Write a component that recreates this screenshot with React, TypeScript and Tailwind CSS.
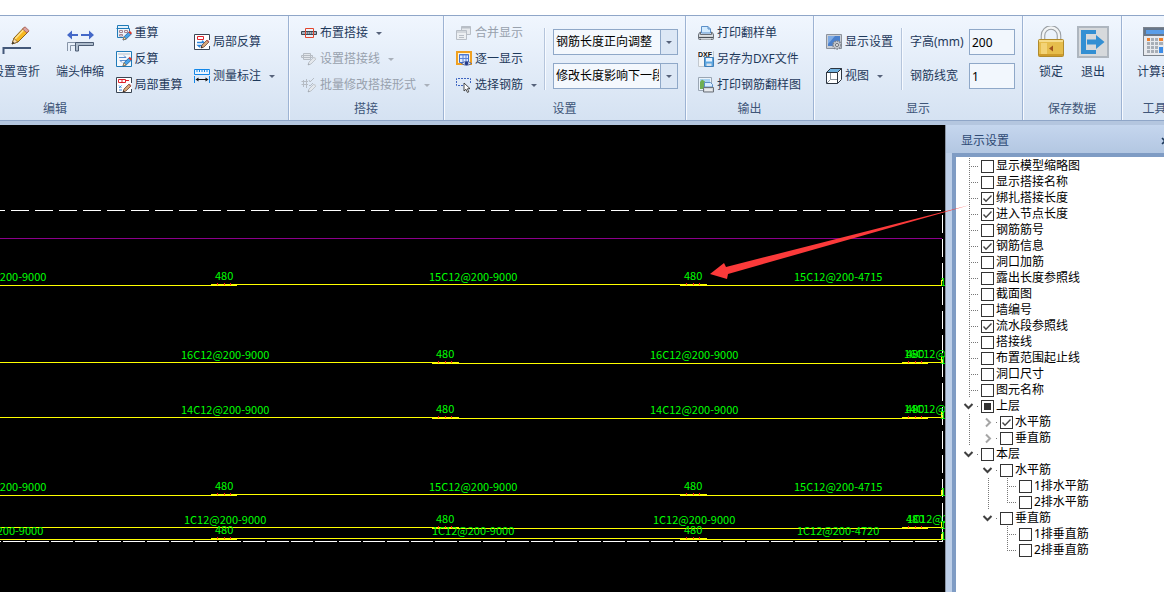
import { ReactNode } from "react";

const INK = "#1e395b";

/* ---------- ribbon icons ---------- */

function Pencil({ x, y, muted }: { x: number; y: number; muted?: boolean }) {
  return (
    <g transform={`translate(${x} ${y})`}>
      <path d="M0 8 L1 5 L6 0 L8 2 L3 7 Z" fill={muted ? "#e4e8ed" : "#d8a878"} stroke={muted ? "#b4bac2" : "#6d4a3a"} strokeWidth="0.8" />
      <path d="M5.5 0.8 L6.6 -0.3 L8.4 1.5 L7.3 2.6 Z" fill={muted ? "#cdd2d8" : "#b8605a"} />
      <path d="M0 8 L0.6 6.2 L1.8 7.4 Z" fill={muted ? "#9aa1aa" : "#1b1b1b"} />
    </g>
  );
}

function BluePencil({ x, y }: { x: number; y: number }) {
  return (
    <g transform={`translate(${x} ${y})`}>
      <path d="M0 9 L1 5.8 L6 0.8 L8.4 3 L3.2 8 Z" fill="#4aa3e8" stroke="#1d5f9c" strokeWidth="0.8" />
      <path d="M5.4 1.2 L6.8 -0.2 L9 2 L7.6 3.4 Z" fill="#e0392b" />
      <path d="M0 9 L1 5.8 L3.2 8 Z" fill="#f7d9a0" stroke="#6d4a2a" strokeWidth="0.5" />
    </g>
  );
}

function Svg16({ children }: { children: ReactNode }) {
  return (
    <svg width="16" height="16" viewBox="0 0 16 16" fill="none" className="shrink-0" aria-hidden="true">
      {children}
    </svg>
  );
}

function Svg32({ children }: { children: ReactNode }) {
  return (
    <svg width="32" height="32" viewBox="0 0 32 32" fill="none" className="shrink-0" aria-hidden="true">
      {children}
    </svg>
  );
}

const icons = {
  bend: (
    <Svg32>
      <path d="M3.5 28 V22 H31" stroke="#44597a" strokeWidth="2" />
      <path d="M12 18 L14 12 L24 1.5 L28.5 5.5 L18 16 Z" fill="#f6b81f" stroke="#8a6420" />
      <path d="M15 13 L25 2.5" stroke="#ffe28a" strokeWidth="1.6" />
      <path d="M22.5 3 L25 0.8 L29 4.6 L27 7 Z" fill="#d9a3a0" stroke="#a04a44" strokeWidth="0.7" />
      <path d="M12 18 L14 12.4 L17.6 16 Z" fill="#f9dfb4" stroke="#6b4d20" strokeWidth="0.6" />
      <path d="M12 18 L12.8 15.6 L14.4 17.2 Z" fill="#222" />
    </Svg32>
  ),
  stretch: (
    <Svg32>
      <path d="M4 9 H14 M17 9 H28" stroke="#4468c8" strokeWidth="2" />
      <path d="M3 9 L8 4.5 V13.5 Z M30 9 L25 4.5 V13.5 Z" fill="#4468c8" />
      <path d="M3.5 25 V16.5 H12.5 M6.5 25 V19.5 H12" stroke="#8795a8" />
      <path d="M11.5 25 V16.5 H29.5 V19.5 H14.5 V25 Z" fill="#aebccc" stroke="#4c5c74" />
    </Svg32>
  ),
  recalc: (
    <Svg16>
      <path d="M1.5 3.5 V0.5 H12.5 V3 M0.5 3.5 H13.5 M1.500 3.500 V12.500 H7 M13.500 3.500 V6" fill="#e4f1fb" stroke="#1f7ab8" />
      <path d="M3.5 5.5 H6.5 V7.5 H3.5 Z M8.5 5.5 H11.5 V7.5 H8.5 Z M3.5 9.5 H6.5 V11 H3.5 Z" stroke="#a8848e" />
      <BluePencil x={7} y={6} />
    </Svg16>
  ),
  reverse: (
    <Svg16>
      <path d="M0.5 0.5 H15.5 V15.5 H0.5 Z" fill="#f4f8fc" stroke="#1f7ab8" />
      <path d="M2 2 H14 V4 H2 Z" fill="#d5dbe2" />
      <path d="M3 6.5 H10 L8 4.5 M12 9.5 H4 L6 11.5" stroke="#5b8fd0" />
      <BluePencil x={7} y={6} />
    </Svg16>
  ),
  partRecalc: (
    <Svg16>
      <path d="M15.5 6 V0.5 H0.5 V15.5 H15.5 V12" fill="#fff" stroke="#3a4654" />
      <path d="M2.5 2.5 H9.5 V5.5 H2.5 Z M6 2.5 V5.5 M10 3.5 H13" stroke="#e0222c" />
      <path d="M3 8.5 L5.5 11 M5.5 8.5 L3 11 M3 13 H6" stroke="#3c8de0" />
      <Pencil x={7} y={7} />
    </Svg16>
  ),
  partReverse: (
    <Svg16>
      <path d="M15.5 6 V0.5 H0.5 V15.5 H15.5 V12" fill="#fff" stroke="#3a4654" />
      <path d="M3.5 2.5 H9.5 V5.5 H3.5 Z" stroke="#e0222c" />
      <path d="M3 8.5 H10 L8 6.8 M10 11.5 H4 L6 13.2" stroke="#2c86dd" strokeWidth="1.3" />
      <Pencil x={7} y={6} />
    </Svg16>
  ),
  measure: (
    <Svg16>
      <path d="M0.5 1.5 H15.5 V6.5 H0.5 Z" fill="#e9f4ff" stroke="#1387e8" />
      <path d="M3 2 V4 M5.5 2 V4 M8 2 V4 M10.5 2 V4 M13 2 V4" stroke="#1387e8" />
      <path d="M0.5 8 V15 M15.5 8 V15" stroke="#1387e8" />
      <path d="M3 11.5 H13" stroke="#111" />
      <path d="M1.5 11.5 L4.5 9.5 V13.5 Z M14.5 11.5 L11.5 9.5 V13.5 Z" fill="#111" />
    </Svg16>
  ),
  lap: (
    <Svg16>
      <path d="M0.5 6.5 H15.5 V9.5 H0.5 Z" fill="#9fb0be" stroke="#3c4753" />
      <path d="M4.5 3.5 H12.5 V12.5 H4.5 Z" stroke="#e2452c" />
      <path d="M6 8 H11" stroke="#3c4753" strokeDasharray="1 1" />
    </Svg16>
  ),
  lapLine: (
    <Svg16>
      <path d="M2.5 2.5 H9.5 V8.5 H2.5 Z M0.5 4.5 H11.5 V6.5 H0.5 Z" fill="#e3e7ec" stroke="#b6bcc4" />
      <Pencil x={7} y={6} muted />
    </Svg16>
  ),
  lapForm: (
    <Svg16>
      <path d="M0.5 4.5 H7 M0.5 7.5 H7 M2.5 3 V10 M5.5 2 V11 M8 3 L9 5 L13 1 M8 8 L9 9 L12 6" stroke="#b6bcc4" />
      <Pencil x={7} y={7} muted />
    </Svg16>
  ),
  merge: (
    <Svg16>
      <path d="M5.5 1.5 H14.5 V9.5 H5.5 Z" fill="#e6e9ed" stroke="#b8bec6" />
      <path d="M5.5 2.5 H14.5" stroke="#b8bec6" strokeWidth="2" />
      <path d="M0.5 5.5 H10.5 V14.5 H0.5 Z" fill="#eceff2" stroke="#b8bec6" />
      <path d="M1 7 H10 M3 10.5 H8 M3 12.5 H8" stroke="#b8bec6" />
    </Svg16>
  ),
  eachOne: (
    <Svg16>
      <path d="M1 1 H15 V13 H1 Z" fill="#fff5d8" stroke="#f0a020" strokeWidth="2" />
      <path d="M3.5 3.5 H12.5 V11.5 H3.5 Z" fill="#dce8ff" stroke="#3e6ed0" />
      <path d="M3.5 4 H12.5 M4 7.5 H12 M7 4 V11 M10 4 V11" stroke="#5a84d8" />
      <path d="M5.5 12.5 Q10.5 8.5 15.5 12.5 Q10.5 16 5.5 12.5 Z" fill="#dfe7f8" stroke="#3a4f8e" strokeWidth="0.8" />
      <circle cx="10.5" cy="12.4" r="1.8" fill="#223a8a" />
    </Svg16>
  ),
  pick: (
    <Svg16>
      <path d="M7 8.5 H0.5 V1.5 H14.5 V7" stroke="#3c63c0" strokeDasharray="2 1" />
      <path d="M8 6 L8 14 L10 12.3 L11.4 15.4 L12.8 14.8 L11.4 11.8 L14 11.6 Z" fill="#fff" stroke="#222" strokeWidth="0.8" />
    </Svg16>
  ),
  printer: (
    <Svg16>
      <path d="M3.5 8 V1.5 H10 L12.500 4 V8 Z" fill="#d3ebff" stroke="#5b8fc8" />
      <path d="M10 1.5 V4 H12.5" stroke="#5b8fc8" />
      <path d="M2.500 7 Q0.5 8 0.5 10 V13.5 Q0.5 14.5 1.5 14.5 H14.5 Q15.500 14.5 15.500 13.5 V10 Q15.5 8 13.5 7 V9.5 H2.5 Z" fill="#c9cdd3" stroke="#6a7078" />
      <path d="M1 11 H15" stroke="#f4f6f8" />
      <path d="M1 12.5 H15" stroke="#4a5058" strokeWidth="1.2" />
      <path d="M3 14 H13" stroke="#eef1f4" />
    </Svg16>
  ),
  dxf: (
    <Svg16>
      <path d="M0 0 H16 V16 H0 Z" fill="#f3f5f7" />
      <path d="M0.5 6 V15.5 H6 M15.5 0 V7" stroke="#c2c8cf" />
      <text x="0" y="5.8" fontSize="7" fontWeight="700" fill="#111" fontFamily="Liberation Sans, sans-serif">DXF</text>
      <path d="M6.5 6.500 H15.5 V15.5 H6.5 Z" fill="#5da6e0" stroke="#3f7fb8" />
      <path d="M8 7 H14 V10.5 H8 Z" fill="#eaf4ff" />
      <path d="M8.5 12.5 H13.5 V15 H8.5 Z" fill="#d8e3ee" />
    </Svg16>
  ),
  printPic: (
    <Svg16>
      <path d="M0.5 0.5 H13.5 V13.5 H0.5 Z" fill="#eaf3fb" stroke="#9aa6b4" />
      <path d="M2 2 H12 V7 H2 Z" fill="#a9d2f2" />
      <path d="M2 12 V5 L4 2.5 L7 4.5 V12 Z" fill="#6fae52" />
      <path d="M6.500 10 V5.5 H12.5 L14.5 7.5 V10 Z" fill="#d9edff" stroke="#5b8fc8" />
      <path d="M5.5 10.5 H15.5 V15 H5.5 Z" fill="#d2d6db" stroke="#6c727a" />
      <path d="M7 13 H14" stroke="#fff" />
    </Svg16>
  ),
  display: (
    <Svg16>
      <path d="M0.5 0.5 H15.5 V14.5 H0.5 Z" fill="#c9ced6" stroke="#8d939c" />
      <path d="M2 2 H14 V12 H2 Z" fill="#4a80cc" />
      <path d="M2 2 H9 L2 10 Z" fill="#7fabe4" />
      <circle cx="11" cy="11" r="4" fill="#c6cad0" stroke="#80868f" strokeDasharray="1.6 1" strokeWidth="1.6" />
      <circle cx="11" cy="11" r="1.5" fill="#fff" stroke="#666c74" />
    </Svg16>
  ),
  cube: (
    <Svg16>
      <path d="M0.5 4.5 H11.5 V15.5 H0.5 Z" fill="#fff" stroke="#2c3540" />
      <path d="M0.5 4.5 L4.5 0.5 H15.5 L11.5 4.5 Z" fill="#6fb0de" stroke="#2c3540" />
      <path d="M11.5 4.5 L15.5 0.5 V11.5 L11.5 15.5 Z" fill="#f4f7fa" stroke="#2c3540" />
      <path d="M4.5 5 V11.5 H11 M4.5 11.5 L1 15" stroke="#8a949e" />
    </Svg16>
  ),
  lock: (
    <Svg32>
      <path d="M8 14 V9.5 A8 8 0 0 1 24 9.5 V14" stroke="#9a9fa4" strokeWidth="4.6" />
      <path d="M8 14 V9.5 A8 8 0 0 1 24 9.5 V14" stroke="#f2f4f5" strokeWidth="2.4" />
      <rect x="3.5" y="13.5" width="25" height="17" rx="1" fill="#e6bd4c" stroke="#b08a2c" />
      <path d="M4 15 H28" stroke="#f6dc8a" strokeWidth="2" />
      <path d="M6 17 H12 V28 H6 Z" fill="#f3d376" />
      <path d="M4 29 H28" stroke="#cd9b2c" strokeWidth="2" />
      <path d="M14 22.5 L18 19.5 V25.5 Z" fill="#a0521c" />
    </Svg32>
  ),
  exit: (
    <Svg32>
      <rect x="1" y="1" width="30" height="30" fill="#d6d9dc" stroke="#aeb6bf" strokeWidth="2" />
      <path d="M19 4 H4 V28 H19 V24 H9 V8 H19 Z" fill="#338fd3" />
      <path d="M10 13.500 H19 V9 L27.500 16 L19 23 V18.500 H10 Z" fill="#338fd3" />
    </Svg32>
  ),
  calc: (
    <Svg32>
      <rect x="4.5" y="1.5" width="28" height="28" fill="#e8eaee" stroke="#7c838c" />
      <path d="M5 2 H32 V10 H5 Z" fill="#66768a" />
      <rect x="7" y="4" width="24" height="4" fill="#5a9de8" />
      <path d="M8 12 H11 V15 H8 Z M20 12 H24 V15 H20 Z" fill="#f0802c" />
      <path d="M12 12 H15 V15 H12 Z M16 12 H19 V15 H16 Z M8 16 H11 V19 H8 Z M12 16 H15 V19 H12 Z M16 16 H19 V19 H16 Z M20 16 H24 V19 H20 Z M8 20 H11 V23 H8 Z M12 20 H15 V23 H12 Z M16 20 H19 V23 H16 Z M8 24 H11 V27 H8 Z M12 24 H15 V27 H12 Z M16 24 H19 V27 H16 Z" fill="#a8aeb6" />
      <path d="M20 21 H24 V27 H20 Z" fill="#3d8ce6" />
    </Svg32>
  ),
};

/* ---------- ribbon parts ---------- */

function Caret({ muted }: { muted?: boolean }) {
  return (
    <svg width="6" height="3" viewBox="0 0 6 3" className="shrink-0" aria-hidden="true">
      <path d="M0 0 H6 L3 3 Z" fill={muted ? "#a9b0ba" : "#56627a"} />
    </svg>
  );
}

function Tool({ icon, label, menu, disabled }: { icon: ReactNode; label: string; menu?: boolean; disabled?: boolean }) {
  return (
    <button type="button" disabled={disabled} className="flex items-center gap-[3px] whitespace-nowrap text-[#1e395b] disabled:text-[#98a1ad]">
      {icon}
      <span>{label}</span>
      {menu && (
        <span className="pl-[5px]">
          <Caret muted={disabled} />
        </span>
      )}
    </button>
  );
}

function BigTool({ icon, label }: { icon: ReactNode; label: string }) {
  return (
    <button type="button" className="flex shrink-0 flex-col items-center gap-1 whitespace-nowrap pt-[6px]">
      {icon}
      <span className="leading-5">{label}</span>
    </button>
  );
}

function Group({ label, className, children }: { label: string; className: string; children: ReactNode }) {
  return (
    <section aria-label={label} className={`flex shrink-0 flex-col border-r border-[#9db3d3] pt-1 shadow-[1px_0_0_#f7faff] ${className}`}>
      <div className="flex h-[78px]">{children}</div>
      <h2 className="text-center leading-[22px] text-[#3e5578]">{label}</h2>
    </section>
  );
}

function Three({ className, children }: { className: string; children: ReactNode }) {
  return <div className={`grid shrink-0 grid-rows-3 justify-items-start ${className}`}>{children}</div>;
}

function Two({ className, children }: { className: string; children: ReactNode }) {
  return <div className={`grid shrink-0 grid-rows-2 content-center justify-items-start py-[5px] ${className}`}>{children}</div>;
}

function Rule() {
  return <div className="my-2 w-px bg-[#b5c5dc] shadow-[1px_0_0_#f7faff]" />;
}

function Combo({ name, value }: { name: string; value: string }) {
  return (
    <div className="relative h-[26px] w-[125px] self-center">
      <select aria-label={name} defaultValue={value} className="h-full w-full appearance-none border border-[#8fa8c8] bg-[#f4f8fd] pl-[2px] pr-[18px] text-black">
        <option>{value}</option>
      </select>
      <span className="pointer-events-none absolute inset-y-px right-px flex w-[17px] items-center justify-center border-l border-[#8fa8c8] bg-[#dce7f5]">
        <Caret />
      </span>
    </div>
  );
}

function Field({ id, label, value }: { id: string; label: string; value: string }) {
  return (
    <div className="flex items-center">
      <label htmlFor={id} className="w-[59px] whitespace-nowrap">
        {label}
      </label>
      <input id={id} defaultValue={value} className="h-[26px] w-[46px] border border-[#8fa8c8] bg-[#f2f7fd] px-[2px] text-black" />
    </div>
  );
}

function Ribbon() {
  return (
    <header className="flex overflow-hidden border-y border-[#8fa6c8] bg-linear-to-b from-[#f0f6fe] to-[#d5e2f2]">
      <Group label="编辑" className="-ml-[178px] w-[467px]">
        <div className="flex flex-1 justify-between pl-[170px] pr-[13px]">
          <div className="flex gap-4">
            <BigTool icon={icons.bend} label="设置弯折" />
            <BigTool icon={icons.stretch} label="端头伸缩" />
          </div>
          <Three className="">
            <Tool icon={icons.recalc} label="重算" />
            <Tool icon={icons.reverse} label="反算" />
            <Tool icon={icons.partRecalc} label="局部重算" />
          </Three>
          <Two className="">
            <Tool icon={icons.partReverse} label="局部反算" />
            <Tool icon={icons.measure} label="测量标注" menu />
          </Two>
        </div>
      </Group>
      <Group label="搭接" className="w-[155px]">
        <Three className="pl-3">
          <Tool icon={icons.lap} label="布置搭接" menu />
          <Tool icon={icons.lapLine} label="设置搭接线" menu disabled />
          <Tool icon={icons.lapForm} label="批量修改搭接形式" menu disabled />
        </Three>
      </Group>
      <Group label="设置" className="w-[242px]">
        <Three className="w-[100px] pl-3">
          <Tool icon={icons.merge} label="合并显示" disabled />
          <Tool icon={icons.eachOne} label="逐一显示" />
          <Tool icon={icons.pick} label="选择钢筋" menu />
        </Three>
        <Rule />
        <Two className="pl-2">
          <Combo name="调整方向" value="钢筋长度正向调整" />
          <Combo name="影响范围" value="修改长度影响下一段" />
        </Two>
      </Group>
      <Group label="输出" className="w-[128px]">
        <Three className="pl-3">
          <Tool icon={icons.printer} label="打印翻样单" />
          <Tool icon={icons.dxf} label="另存为DXF文件" />
          <Tool icon={icons.printPic} label="打印钢筋翻样图" />
        </Three>
      </Group>
      <Group label="显示" className="w-[209px]">
        <Two className="w-[87px] pl-3">
          <Tool icon={icons.display} label="显示设置" />
          <Tool icon={icons.cube} label="视图" menu />
        </Two>
        <Rule />
        <Two className="pl-2">
          <Field id="font-height" label="字高(mm)" value="200" />
          <Field id="bar-width" label="钢筋线宽" value="1" />
        </Two>
      </Group>
      <Group label="保存数据" className="w-[99px]">
        <div className="flex gap-[10px] pl-3">
          <BigTool icon={icons.lock} label="锁定" />
          <BigTool icon={icons.exit} label="退出" />
        </div>
      </Group>
      <Group label="工具" className="w-[66px]">
        <div className="flex pl-[15px]">
          <BigTool icon={icons.calc} label="计算器" />
        </div>
      </Group>
    </header>
  );
}

/* ---------- drawing ---------- */

type BarRow = { y: number; kind: "odd" | "even"; marks: [string, number][] };

const rows: BarRow[] = [
  { y: 159, kind: "odd", marks: [["15C12@200-9000", -42], ["15C12@200-9000", 429], ["15C12@200-4715", 794]] },
  { y: 237, kind: "even", marks: [["16C12@200-9000", 181], ["16C12@200-9000", 650], ["16C12@200-4715", 904]] },
  { y: 292, kind: "even", marks: [["14C12@200-9000", 181], ["14C12@200-9000", 650], ["14C12@200-4715", 904]] },
  { y: 369, kind: "odd", marks: [["15C12@200-9000", -42], ["15C12@200-9000", 429], ["15C12@200-4715", 794]] },
  { y: 402, kind: "even", marks: [["1C12@200-9000", 184], ["1C12@200-9000", 653], ["1C12@200-4720", 907]] },
  { y: 413, kind: "odd", marks: [["1C12@200-9000", -39], ["1C12@200-9000", 432], ["1C12@200-4720", 797]] },
];

function Bar({ y, kind, marks }: BarRow) {
  const odd = kind === "odd";
  const laps = odd ? [211, 680] : [432, 902];
  const path = odd
    ? `M0 ${y + 1.5} H237 M211 ${y + 0.5} H707 M680 ${y + 1.5} H941.5 V${y - 4}`
    : `M0 ${y + 0.5} H459 M432 ${y + 1.5} H928 M902 ${y + 0.5} H941.5 V${y - 5}`;
  return (
    <g>
      {laps.map((x) => (
        <text key={x} x={x + 4} y={y - 4}>480</text>
      ))}
      {marks.map(([t, x]) => (
        <text key={x} x={x} y={x > 900 ? y - 4 : y - 3}>{t}</text>
      ))}
      <text x="940" y={y + 2}>1</text>
      <path d={path} stroke="#ffff00" fill="none" />
      {laps.map((x) => (
        <path key={x} d={`M${x + 6.5} ${y - 1} v2 M${x + 13.5} ${y - 1} v2 M${x + 19.5} ${y - 1} v2`} stroke="#ff2020" />
      ))}
    </g>
  );
}

function Drawing() {
  return (
    <div className="min-w-0 flex-1 overflow-hidden bg-black">
      <svg width="945" height="467" viewBox="0 0 945 467" role="img" aria-label="钢筋排布图" className="block">
        <g shapeRendering="crispEdges">
          <path d="M-13 85.5 H943" stroke="#fff" strokeDasharray="18 6" />
          <path d="M942.5 90 V416" stroke="#fff" strokeDasharray="18 6" />
          <path d="M-21 416.5 H943" stroke="#fff" strokeDasharray="22 2" />
          <path d="M0 113.5 H942" stroke="#8b008b" />
        </g>
        <g fill="#00ff00" fontSize="11" fontFamily="'Noto Sans CJK SC', sans-serif">
          {rows.map((r) => (
            <Bar key={r.y} y={r.y} kind={r.kind} marks={r.marks} />
          ))}
        </g>
      </svg>
    </div>
  );
}

/* ---------- settings tree ---------- */

type Slot = "tee" | "end" | "line" | "none" | "open" | "closed";
type Item = { label: string; slots: Slot[]; state?: "on" | "mixed" };

const items: Item[] = [
  { label: "显示模型缩略图", slots: ["tee"] },
  { label: "显示搭接名称", slots: ["tee"] },
  { label: "绑扎搭接长度", slots: ["tee"], state: "on" },
  { label: "进入节点长度", slots: ["tee"], state: "on" },
  { label: "钢筋筋号", slots: ["tee"] },
  { label: "钢筋信息", slots: ["tee"], state: "on" },
  { label: "洞口加筋", slots: ["tee"] },
  { label: "露出长度参照线", slots: ["tee"] },
  { label: "截面图", slots: ["tee"] },
  { label: "墙编号", slots: ["tee"] },
  { label: "流水段参照线", slots: ["tee"], state: "on" },
  { label: "搭接线", slots: ["tee"] },
  { label: "布置范围起止线", slots: ["tee"] },
  { label: "洞口尺寸", slots: ["tee"] },
  { label: "图元名称", slots: ["tee"] },
  { label: "上层", slots: ["open"], state: "mixed" },
  { label: "水平筋", slots: ["line", "closed"], state: "on" },
  { label: "垂直筋", slots: ["line", "closed"] },
  { label: "本层", slots: ["open"] },
  { label: "水平筋", slots: ["none", "open"] },
  { label: "1排水平筋", slots: ["none", "line", "tee"] },
  { label: "2排水平筋", slots: ["none", "line", "end"] },
  { label: "垂直筋", slots: ["none", "open"] },
  { label: "1排垂直筋", slots: ["none", "none", "tee"] },
  { label: "2排垂直筋", slots: ["none", "none", "end"] },
];

function SlotMark({ kind }: { kind: Slot }) {
  return (
    <svg width="19" height="16" viewBox="0 0 19 16" fill="none" className="shrink-0" aria-hidden="true">
      {(kind === "tee" || kind === "line") && <path d="M9.5 0 V16" stroke="#777" strokeDasharray="1 1" />}
      {kind === "end" && <path d="M9.5 0 V9" stroke="#777" strokeDasharray="1 1" />}
      {(kind === "tee" || kind === "end") && <path d="M11 8.5 H18" stroke="#777" strokeDasharray="1 1" />}
      {(kind === "open" || kind === "closed") && <path d="M17 8.5 H18" stroke="#777" />}
      {kind === "open" && <path d="M4.5 6 L8.5 10 L12.5 6" stroke="#404040" strokeWidth="2" />}
      {kind === "closed" && <path d="M7 4.5 L11 8.5 L7 12.5" stroke="#a6a6a6" strokeWidth="2" />}
    </svg>
  );
}

function TreeRow({ item }: { item: Item }) {
  return (
    <li className="flex h-4 items-center">
      {item.slots.map((s, i) => (
        <SlotMark key={i} kind={s} />
      ))}
      <label className="flex items-center gap-[2px] whitespace-nowrap pl-[2px]">
        <span className="grid size-[13px] shrink-0 place-items-center">
          <input type="checkbox" defaultChecked={item.state === "on"} className="peer col-start-1 row-start-1 size-[13px] appearance-none border border-[#333333] bg-white" />
          <svg width="13" height="13" viewBox="0 0 13 13" fill="none" className="pointer-events-none invisible col-start-1 row-start-1 peer-checked:visible" aria-hidden="true">
            <path d="M2.5 6.5 L5 9.2 L10.5 3.5" stroke="#444" strokeWidth="1.4" />
          </svg>
          {item.state === "mixed" && <span className="pointer-events-none col-start-1 row-start-1 size-[7px] bg-[#333333]" />}
        </span>
        <span>{item.label}</span>
      </label>
    </li>
  );
}

function SettingsPanel() {
  return (
    <aside className="flex w-[219px] shrink-0 flex-col border-l border-[#8a94a4] bg-[#bdcfe8]">
      <div className="flex h-7 items-center justify-between overflow-hidden bg-linear-to-b from-[#c5d6ee] to-[#b3c7e2] pl-[15px] pt-[3px]">
        <h2 className="text-[#2e4a74]">显示设置</h2>
        <button type="button" aria-label="关闭" className="-mr-[5px]">
          <svg width="8" height="8" viewBox="0 0 8 8" aria-hidden="true">
            <path d="M1 1 L7 7 M7 1 L1 7" stroke={INK} strokeWidth="1.6" />
          </svg>
        </button>
      </div>
      <ul className="ml-[6px] flex-1 overflow-hidden border-l-4 border-t-4 border-[#7f9cc4] bg-white pl-1 pt-px text-black">
        {items.map((it, i) => (
          <TreeRow key={i} item={it} />
        ))}
      </ul>
    </aside>
  );
}

export default function App() {
  return (
    <div className="flex min-h-screen flex-col bg-white pt-[15px] font-['Noto_Sans','Noto_Sans_CJK_SC',sans-serif] text-xs text-[#1e395b]">
      <Ribbon />
      <div className="h-1 bg-[#b4c6df]" />
      <main className="relative flex flex-1">
        <Drawing />
        <SettingsPanel />
        <svg width="270" height="90" viewBox="0 0 270 90" className="pointer-events-none absolute right-[190px] top-[70px]" aria-hidden="true">
          <path d="M6 79 L20 68 L22 72 L266 10 L24 79 L23 84 Z" fill="#fb3a3a" />
        </svg>
      </main>
    </div>
  );
}
